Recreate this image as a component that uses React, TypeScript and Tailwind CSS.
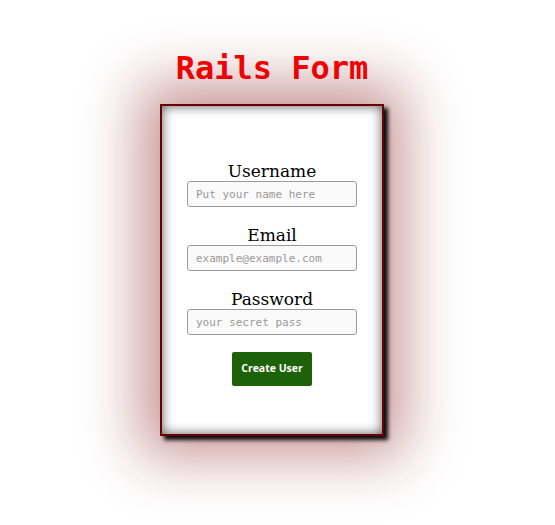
import React from "react";

function Field({ label, placeholder, type }: { label: string; placeholder: string; type: string }) {
  return (
    <div className="flex flex-col items-center">
      <label className="block text-[17px] leading-[20px] text-black font-['DejaVu_Serif',serif]">
        {label}
      </label>
      <input
        type={type}
        placeholder={placeholder}
        className="w-[170px] h-[26px] border border-[#9a9a9a] rounded-[3px] bg-[#fafafa] px-[8px] text-[11px] placeholder:text-[#999] outline-none font-['DejaVu_Sans_Mono',monospace]"
      />
    </div>
  );
}

export default function App() {
  return (
    <div className="w-[544px] min-h-[525px] bg-white flex flex-col items-center pt-[48px]">
      <h1 className="text-[32px] leading-[40px] font-bold text-[#ff0000] mb-[16px] font-['DejaVu_Sans_Mono',monospace]">
        Rails Form
      </h1>
      <div className="w-[224px] h-[332px] border-2 border-[#6b0000] bg-white flex flex-col items-center pt-[55px] gap-[18px] shadow-[inset_0_0_12px_rgba(0,0,0,0.65),4px_4px_4px_rgba(0,0,0,0.95),0_0_55px_20px_rgba(130,20,20,0.45)]">
        <Field label="Username" placeholder="Put your name here" type="text" />
        <Field label="Email" placeholder="example@example.com" type="email" />
        <Field label="Password" placeholder="your secret pass" type="password" />
        <button className="mt-[-1px] w-[80px] h-[34px] bg-[#1d6108] rounded-[2px] text-white text-[10.5px] font-bold font-['Open_Sans',sans-serif]">
          Create User
        </button>
      </div>
    </div>
  );
}
